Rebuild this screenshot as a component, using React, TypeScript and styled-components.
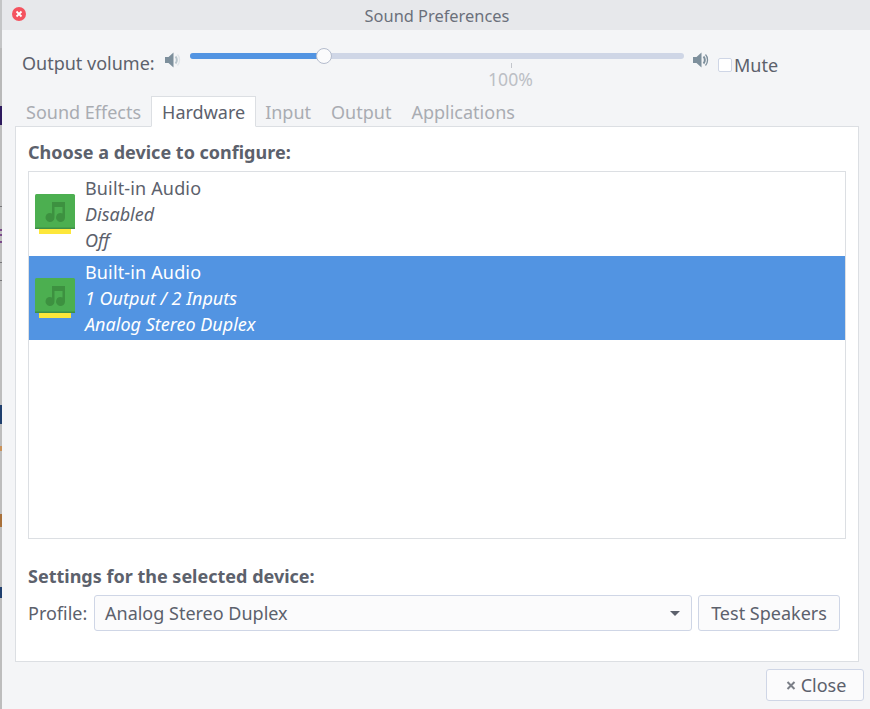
import React from "react";
import styled, { createGlobalStyle } from "styled-components";

const GlobalStyle = createGlobalStyle`
  html, body {
    margin: 0;
    padding: 0;
    background: #f4f5f7;
    overflow: hidden;
  }
  * {
    box-sizing: border-box;
  }
`;

const Desktop = styled.div`
  display: flex;
  width: 870px;
  height: 709px;
  font-family: "Noto Sans", sans-serif;
  font-size: 18px;
  color: #5c616c;
`;

const Backdrop = styled.div`
  width: 2px;
  flex: none;
  background: linear-gradient(
    #c4c5c6 0 48px,
    #b9b9b9 48px 106px,
    #2e1a5e 106px 125px,
    #bdbdbd 125px 206px,
    #77777a 206px 207px,
    #bdbdbd 207px 229px,
    #7a4a8a 229px 231px,
    #bdbdbd 231px 234px,
    #7a4a8a 234px 236px,
    #bdbdbd 236px 241px,
    #7a4a8a 241px 243px,
    #bdbdbd 243px 262px,
    #77777a 262px 263px,
    #bdbdbd 263px 280px,
    #77777a 280px 281px,
    #bdbdbd 281px 405px,
    #1f3f6e 405px 424px,
    #bdbdbd 424px 446px,
    #c9925a 446px 451px,
    #bdbdbd 451px 514px,
    #a8703a 514px 527px,
    #bdbdbd 527px 587px,
    #1f3f6e 587px 598px,
    #bdbdbd 598px
  );
`;

const Win = styled.div`
  flex: 1;
  display: flex;
  flex-direction: column;
  min-width: 0;
`;

const TitleBar = styled.div`
  height: 30px;
  flex: none;
  position: relative;
  display: flex;
  align-items: center;
  justify-content: center;
  background: #e7e8eb;
  font-size: 16.4px;
  color: #6b707b;
  padding-left: 2px;
`;

const CloseDot = styled.span`
  position: absolute;
  left: 10px;
  top: 7px;
  width: 14px;
  height: 14px;
  border-radius: 50%;
  background: #f4535f;
  display: flex;
  align-items: center;
  justify-content: center;
`;

const Body = styled.div`
  flex: 1;
  display: flex;
  flex-direction: column;
  padding: 0 6px 8px 13px;
  min-height: 0;
`;

const VolumeRow = styled.div`
  height: 66px;
  flex: none;
  display: flex;
  align-items: flex-start;
  padding-left: 7px;
`;

const VolumeLabel = styled.span`
  margin-top: 21px;
  line-height: 24px;
  width: 143px;
  flex: none;
`;

const SpeakerWrap = styled.span`
  margin-top: 20px;
  width: 17px;
  height: 17px;
  flex: none;
  display: block;
`;

const SliderBox = styled.div`
  width: 494px;
  margin: 0 9px 0 8px;
  flex: none;
  display: flex;
  flex-direction: column;
  align-items: stretch;
`;

const Track = styled.div`
  margin-top: 23px;
  height: 6px;
  border-radius: 3px;
  background: #cfd6e6;
  position: relative;
`;

const TrackFill = styled.div<{ $pct: number }>`
  height: 100%;
  width: ${(p) => p.$pct}%;
  border-radius: 3px 0 0 3px;
  background: #5294e2;
`;

const Thumb = styled.span<{ $pct: number }>`
  position: absolute;
  left: ${(p) => p.$pct}%;
  top: -5px;
  width: 16px;
  height: 16px;
  margin-left: -8px;
  border-radius: 50%;
  background: #fbfbfc;
  border: 1px solid #b4bccd;
`;

const Tick = styled.span`
  width: 1px;
  height: 5px;
  margin: 4px 0 0 321px;
  background: #c3c6cc;
`;

const TickLabel = styled.span`
  margin: 1px 0 0 298px;
  font-size: 17.6px;
  line-height: 20px;
  color: #bcbfc5;
`;

const MuteLabel = styled.label`
  margin: 23px 0 0 8px;
  display: flex;
  align-items: center;
  height: 24px;
  line-height: 24px;
`;

const CheckBox = styled.span`
  width: 14px;
  height: 14px;
  margin-right: 2px;
  border: 1px solid #cfd6e6;
  border-radius: 2px;
  background: #fff;
`;

const TabBar = styled.div`
  height: 31px;
  flex: none;
  display: flex;
  align-items: flex-end;
  padding-left: 1px;
  margin-bottom: -1px;
  position: relative;
  z-index: 1;
`;

const Tab = styled.div<{ $active?: boolean }>`
  height: 31px;
  line-height: 31px;
  padding: 0 ${(p) => (p.$active ? "10px" : "9px")};
  margin-right: ${(p) => (p.$active ? "-1px" : "0")};
  border: 1px solid ${(p) => (p.$active ? "#dcdfe3" : "transparent")};
  border-bottom-color: ${(p) => (p.$active ? "#fff" : "transparent")};
  background: ${(p) => (p.$active ? "#fff" : "transparent")};
  color: ${(p) => (p.$active ? "#5c616c" : "#a9acb2")};
`;

const Panel = styled.div`
  height: 536px;
  flex: none;
  margin-right: 5px;
  display: flex;
  flex-direction: column;
  background: #fff;
  border: 1px solid #dcdfe3;
  padding: 13px 12px 0;
`;

const Heading = styled.div`
  font-weight: 700;
  font-size: 18px;
  line-height: 24px;
`;

const DeviceList = styled.div`
  height: 368px;
  margin-top: 7px;
  border: 1px solid #dcdfe3;
  background: #fff;
  flex: none;
  display: flex;
  flex-direction: column;
`;

const DeviceRow = styled.div<{ $selected?: boolean }>`
  height: 84px;
  flex: none;
  display: flex;
  align-items: center;
  padding-left: 6px;
  background: ${(p) => (p.$selected ? "#5294e2" : "transparent")};
  color: ${(p) => (p.$selected ? "#fff" : "#5c616c")};
`;

const DeviceText = styled.div`
  margin-left: 8px;
  line-height: 26px;
  display: flex;
  flex-direction: column;
`;

const DeviceName = styled.span`
  letter-spacing: 0.15px;
`;

const Italic = styled.span`
  font-style: italic;
`;

const SettingsHeading = styled(Heading)`
  margin-top: 25px;
`;

const ProfileRow = styled.div`
  margin-top: 7px;
  height: 36px;
  display: flex;
  align-items: center;
`;

const ProfileLabel = styled.span`
  width: 66px;
  flex: none;
`;

const Select = styled.div`
  width: 598px;
  height: 36px;
  flex: none;
  display: flex;
  align-items: center;
  justify-content: space-between;
  padding: 0 11px 0 10px;
  background: #fbfbfc;
  border: 1px solid #cfd6e6;
  border-radius: 3px;
`;

const Caret = styled.span`
  width: 0;
  height: 0;
  border-left: 5px solid transparent;
  border-right: 5px solid transparent;
  border-top: 5px solid #5c616c;
`;

const Button = styled.button`
  height: 36px;
  font: inherit;
  color: #5c616c;
  background: #fbfbfc;
  border: 1px solid #cfd6e6;
  border-radius: 3px;
  padding: 0 12px;
`;

const TestButton = styled(Button)`
  margin-left: 6px;
  width: 142px;
  white-space: nowrap;
`;

const Footer = styled.div`
  flex: 1;
  display: flex;
  justify-content: flex-end;
  align-items: flex-end;
`;

const CloseButton = styled(Button)`
  width: 98px;
  height: 32px;
  padding: 0 10px 0 12px;
  display: flex;
  align-items: center;
  justify-content: center;
  gap: 5px;
`;

const Speaker = ({ loud }: { loud?: boolean }) => (
  <svg width="17" height="17" viewBox="0 0 17 17">
    <path d="M0 5h3.500L8.500.5v15L3.500 11H0z" fill="#7d8f9c" />
    <path
      d="M10.500 4.500c1.800 1.800 1.800 5.200 0 7"
      fill="none"
      stroke={loud ? "#7d8f9c" : "#b9c5cc"}
      strokeWidth="2"
    />
    <path
      d="M12.500 2.500c2.700 2.800 2.700 8.200 0 11"
      fill="none"
      stroke={loud ? "#7d8f9c" : "#dfe4e8"}
      strokeWidth="1.300"
    />
  </svg>
);

const CardIcon = () => (
  <svg width="42" height="42" viewBox="0 0 42 42">
    <rect x="0" y="1" width="40" height="35" rx="1.500" fill="#4caf50" />
    <rect x="0" y="34.500" width="40" height="1.500" fill="#3f8f46" />
    <rect x="4" y="36" width="32" height="5" fill="#fde73a" />
    <path
      d="M17 9h13v15.500a4.500 4.500 0 1 1-2.500-4.030V14h-8v10.500a4.500 4.500 0 1 1-2.500-4.030z"
      fill="#3d9140"
    />
  </svg>
);

export default function App() {
  return (
    <>
      <GlobalStyle />
      <Desktop>
        <Backdrop />
        <Win>
          <TitleBar>
            <CloseDot>
              <svg width="8" height="8" viewBox="0 0 8 8">
                <path d="M1.500 1.500l5 5M6.500 1.500l-5 5" stroke="#fff" strokeWidth="1.800" />
              </svg>
            </CloseDot>
            Sound Preferences
          </TitleBar>
          <Body>
            <VolumeRow>
              <VolumeLabel>Output volume:</VolumeLabel>
              <SpeakerWrap>
                <Speaker />
              </SpeakerWrap>
              <SliderBox>
                <Track>
                  <TrackFill $pct={27.200} />
                  <Thumb $pct={27.200} />
                </Track>
                <Tick />
                <TickLabel>100%</TickLabel>
              </SliderBox>
              <SpeakerWrap>
                <Speaker loud />
              </SpeakerWrap>
              <MuteLabel>
                <CheckBox />
                Mute
              </MuteLabel>
            </VolumeRow>
            <TabBar>
              <Tab>Sound Effects</Tab>
              <Tab $active>Hardware</Tab>
              <Tab>Input</Tab>
              <Tab>Output</Tab>
              <Tab>Applications</Tab>
            </TabBar>
            <Panel>
              <Heading>Choose a device to configure:</Heading>
              <DeviceList>
                <DeviceRow>
                  <CardIcon />
                  <DeviceText>
                    <DeviceName>Built-in Audio</DeviceName>
                    <Italic>Disabled</Italic>
                    <Italic>Off</Italic>
                  </DeviceText>
                </DeviceRow>
                <DeviceRow $selected>
                  <CardIcon />
                  <DeviceText>
                    <DeviceName>Built-in Audio</DeviceName>
                    <Italic>1 Output / 2 Inputs</Italic>
                    <Italic>Analog Stereo Duplex</Italic>
                  </DeviceText>
                </DeviceRow>
              </DeviceList>
              <SettingsHeading>Settings for the selected device:</SettingsHeading>
              <ProfileRow>
                <ProfileLabel>Profile:</ProfileLabel>
                <Select>
                  Analog Stereo Duplex
                  <Caret />
                </Select>
                <TestButton>Test Speakers</TestButton>
              </ProfileRow>
            </Panel>
            <Footer>
              <CloseButton>
                <svg width="10" height="10" viewBox="0 0 10 10">
                  <path d="M1.500 2l7 7M8.500 2l-7 7" stroke="#7b7f88" strokeWidth="2" />
                </svg>
                Close
              </CloseButton>
            </Footer>
          </Body>
        </Win>
      </Desktop>
    </>
  );
}
